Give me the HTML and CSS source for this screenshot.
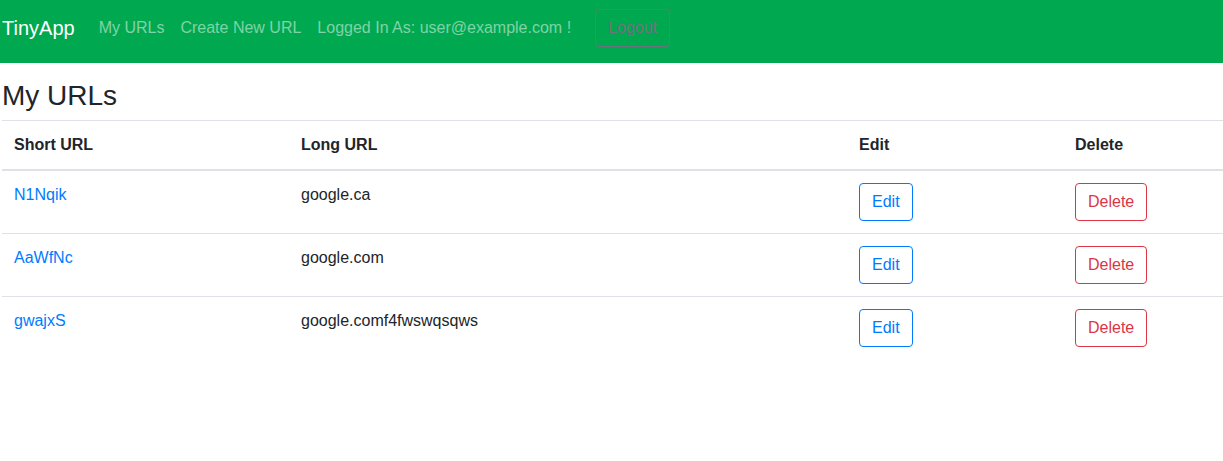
FILE: index.html
```html
<!DOCTYPE html>
<html lang="en">
<head>
<meta charset="utf-8">
<title>TinyApp</title>
<link rel="stylesheet" href="styles.css">
</head>
<body>
<nav class="navbar">
  <a class="brand" href="#">TinyApp</a>
  <div class="nav">
    <a class="nav-link" href="#">My URLs</a>
    <a class="nav-link" href="#">Create New URL</a>
    <span class="nav-link">Logged In As: user@example.com !</span>
    <form class="logout-form">
      <button type="button" class="btn btn-secondary-outline">Logout</button>
    </form>
  </div>
</nav>
<main class="main">
  <h3 class="title">My URLs</h3>
  <table class="table">
    <colgroup>
      <col class="c-short">
      <col class="c-long">
      <col class="c-edit">
      <col class="c-del">
    </colgroup>
    <thead>
      <tr><th>Short URL</th><th>Long URL</th><th>Edit</th><th>Delete</th></tr>
    </thead>
    <tbody>
      <tr>
        <td><a class="link" href="#">N1Nqik</a></td>
        <td>google.ca</td>
        <td><button type="button" class="btn btn-primary-outline">Edit</button></td>
        <td><button type="button" class="btn btn-danger-outline">Delete</button></td>
      </tr>
      <tr>
        <td><a class="link" href="#">AaWfNc</a></td>
        <td>google.com</td>
        <td><button type="button" class="btn btn-primary-outline">Edit</button></td>
        <td><button type="button" class="btn btn-danger-outline">Delete</button></td>
      </tr>
      <tr>
        <td><a class="link" href="#">gwajxS</a></td>
        <td>google.comf4fwswqsqws</td>
        <td><button type="button" class="btn btn-primary-outline">Edit</button></td>
        <td><button type="button" class="btn btn-danger-outline">Delete</button></td>
      </tr>
    </tbody>
  </table>
</main>
</body>
</html>
```
FILE: styles.css
```css
* { box-sizing: border-box; }
html, body { margin: 0; padding: 0; }
body {
  font-family: "Liberation Sans", Arial, sans-serif;
  font-size: 16px;
  line-height: 1.5;
  color: #212529;
  background: #fff;
}
.navbar {
  display: flex;
  align-items: center;
  background: #00a84f;
  height: 63px;
  padding: 9px 0 16px 2px;
}
.brand {
  font-size: 20px;
  line-height: 30px;
  color: #fff;
  text-decoration: none;
  margin-right: 16px;
  padding: 5px 0;
}
.nav {
  display: flex;
  align-items: center;
}
.nav-link {
  display: block;
  padding: 8px 8px;
  color: rgba(255, 255, 255, 0.5);
  text-decoration: none;
}
.logout-form {
  margin: 0 0 0 16px;
  display: flex;
}
.btn {
  display: inline-block;
  font-family: inherit;
  font-size: 16px;
  line-height: 24px;
  padding: 6px 12px;
  border: 1px solid transparent;
  border-radius: 4px;
  background: transparent;
  cursor: pointer;
}
.btn-secondary-outline { color: #6c757d; border-color: #6c757d; }
.btn-primary-outline { color: #007bff; border-color: #007bff; }
.btn-danger-outline { color: #dc3545; border-color: #dc3545; }
.main {
  padding: 0 0 0 2px;
}
.title {
  font-size: 28px;
  font-weight: 500;
  line-height: 1.2;
  margin: 16px 0 7px;
}
.table {
  width: 100%;
  border-collapse: collapse;
}
.c-short { width: 287px; }
.c-long { width: 558px; }
.c-edit { width: 216px; }
.c-del { width: 160px; }
.table th, .table td {
  padding: 12px;
  text-align: left;
  vertical-align: top;
  border-top: 1px solid #dee2e6;
}
.table th { font-weight: bold; }
.table thead th {
  border-bottom: 2px solid #dee2e6;
}
.link { color: #007bff; text-decoration: none; }
```
